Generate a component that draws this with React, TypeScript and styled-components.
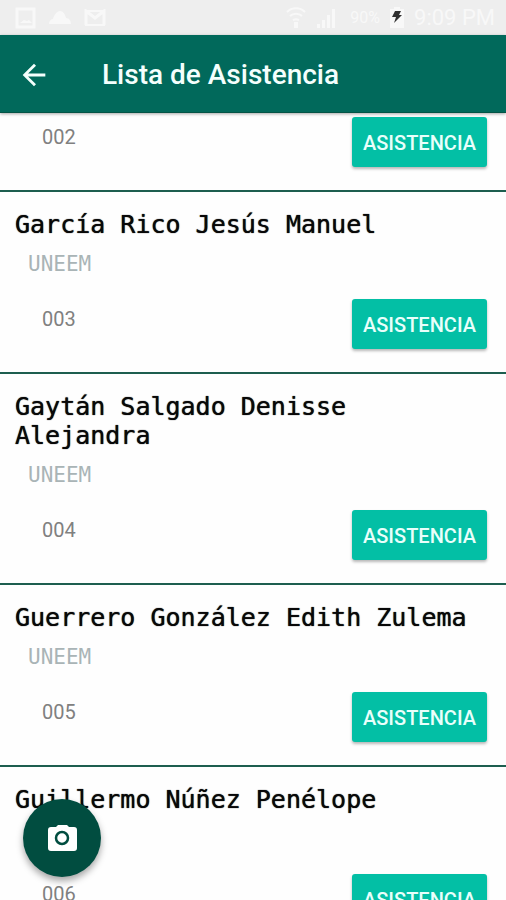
import React from "react";
import styled, { createGlobalStyle } from "styled-components";

const GlobalStyle = createGlobalStyle`
  *, *::before, *::after { box-sizing: border-box; }
  body { margin: 0; background: #fefefe; font-family: Roboto, sans-serif; }
  h1, h2, p, ul { margin: 0; padding: 0; }
`;

const Screen = styled.div`
  display: flex;
  flex-direction: column;
  height: 100vh;
  overflow: hidden;
`;

const StatusBar = styled.div`
  flex: none;
  display: flex;
  align-items: center;
  justify-content: space-between;
  height: 35px;
  padding: 0 11px 0 15px;
  background: #eeeeee;
  color: #f8f8f8;
`;

const StatusGroup = styled.div<{ $gap: number }>`
  display: flex;
  align-items: center;
  gap: ${(p) => p.$gap}px;
`;

const Percent = styled.span`
  margin-left: 4px;
  font-size: 16px;
  line-height: 20px;
`;

const Clock = styled.time`
  font-size: 22px;
  line-height: 24px;
`;

const AppBar = styled.header`
  flex: none;
  z-index: 1;
  display: flex;
  align-items: center;
  gap: 51px;
  height: 78px;
  padding: 2px 17px 0;
  background: #01695b;
  border-bottom: 1px solid #045446;
  box-shadow: 0 1px 3px rgba(0, 0, 0, 0.35);
  color: #f4fffd;
`;

const BackButton = styled.button`
  display: flex;
  padding: 0;
  border: 0;
  background: none;
  color: inherit;
  cursor: pointer;
`;

const Title = styled.h1`
  font-size: 28px;
  font-weight: 500;
  line-height: 32px;
`;

const List = styled.ul`
  flex: 1;
  min-height: 0;
  overflow: hidden;
  list-style: none;
`;

const Row = styled.li<{ $partial?: boolean }>`
  padding: ${(p) => (p.$partial ? 4 : 18)}px 19px 23px 15px;
  border-bottom: 2px solid #1d5e4f;
`;

const Name = styled.h2`
  color: #080808;
  font-family: "DejaVu Sans Mono", monospace;
  font-size: 25px;
  font-weight: 400;
  line-height: 29px;
  text-shadow: 0 0 1px #080808;
`;

const Group = styled.p`
  margin: 13px 0 23px 13px;
  color: #a9b4b6;
  font-family: "DejaVu Sans Mono", monospace;
  font-size: 21px;
  line-height: 24px;
`;

const RowFooter = styled.div`
  display: flex;
  align-items: flex-start;
  justify-content: space-between;
  padding-left: 27px;
`;

const Code = styled.span`
  padding-top: 8px;
  color: #808080;
  font-size: 20px;
  line-height: 24px;
`;

const AttendButton = styled.button`
  width: 135px;
  height: 50px;
  padding: 2px 0 0;
  border: 0;
  border-radius: 3px;
  background: #03bfa5;
  box-shadow: 0 2px 3px rgba(0, 0, 0, 0.28);
  color: #e9fffb;
  font-family: inherit;
  font-size: 20px;
  font-weight: 500;
  line-height: 24px;
  cursor: pointer;
`;

const CameraButton = styled.button`
  position: fixed;
  z-index: 2;
  left: 23px;
  bottom: 23px;
  display: flex;
  align-items: center;
  justify-content: center;
  width: 78px;
  height: 78px;
  padding: 0;
  border: 0;
  border-radius: 50%;
  background: #014d40;
  box-shadow: 0 4px 7px rgba(0, 0, 0, 0.35);
  color: #ffffff;
  cursor: pointer;
`;

interface Student {
  name?: string;
  group?: string;
  code: string;
}

const students: Student[] = [
  { code: "002" },
  { name: "García Rico Jesús Manuel", group: "UNEEM", code: "003" },
  { name: "Gaytán Salgado Denisse Alejandra", group: "UNEEM", code: "004" },
  { name: "Guerrero González Edith Zulema", group: "UNEEM", code: "005" },
  { name: "Guillermo Núñez Penélope", group: "\u00a0", code: "006" },
];

const PictureIcon = () => (
  <svg width="21" height="22" viewBox="0 0 21 22" fill="none" aria-hidden="true">
    <rect x="2" y="2" width="17" height="18" stroke="currentColor" strokeWidth="3" />
    <path d="M5 16l4-3 3 1 2-1 3 3z" fill="currentColor" />
  </svg>
);

const CloudIcon = () => (
  <svg width="24" height="22" viewBox="0 0 24 22" fill="currentColor" aria-hidden="true">
    <path d="M1 17c0-3 2-5 4-5 1-4 4-8 7-8s5 3 6 7c3 0 5 3 5 6z" />
  </svg>
);

const MailIcon = () => (
  <svg width="22" height="18" viewBox="0 0 22 18" fill="none" aria-hidden="true">
    <path d="M2 16V2l9 7 9-7v14" stroke="currentColor" strokeWidth="3" />
    <path d="M1 2h20M1 16h20" stroke="currentColor" strokeWidth="2" />
  </svg>
);

const WifiIcon = () => (
  <svg width="20" height="24" viewBox="0 0 20 24" fill="none" stroke="currentColor" strokeWidth="2" aria-hidden="true">
    <path d="M1 6c5-5 13-5 18 0M4 10c3-3 9-3 12 0M7 14c2-1 4-1 6 0" />
    <path d="M10 16v6" strokeWidth="4" />
  </svg>
);

const SignalIcon = () => (
  <svg width="20" height="22" viewBox="0 0 20 22" fill="currentColor" aria-hidden="true">
    <path d="M1 17h3v4H1zM6 13h3v8H6zM11 8h3v13h-3zM16 2h3v19h-3z" />
  </svg>
);

const BatteryIcon = () => (
  <svg width="14" height="21" viewBox="0 0 14 21" aria-hidden="true">
    <path d="M4 0h6v2h4v19H0V2h4z" fill="#f8f8f8" />
    <path d="M5 4h6l-2 4h3l-8 8 2-6H2z" fill="#303030" />
  </svg>
);

const BackIcon = () => (
  <svg width="34" height="34" viewBox="0 0 24 24" fill="currentColor" aria-hidden="true">
    <path d="M20 11H7.83l5.59-5.59L12 4l-8 8 8 8 1.41-1.41L7.83 13H20v-2z" />
  </svg>
);

const CameraIcon = () => (
  <svg width="36" height="36" viewBox="0 0 36 36" aria-hidden="true">
    <path
      d="M14 5h9l2 2h5a3 3 0 0 1 3 3v18a3 3 0 0 1-3 3H7a3 3 0 0 1-3-3v-18a3 3 0 0 1 3-3h5z"
      fill="currentColor"
    />
    <circle cx="18" cy="18" r="6" fill="none" stroke="#014d40" strokeWidth="2.5" />
  </svg>
);

export default function App() {
  return (
    <Screen>
      <GlobalStyle />
      <StatusBar>
        <StatusGroup $gap={12}>
          <PictureIcon />
          <CloudIcon />
          <MailIcon />
        </StatusGroup>
        <StatusGroup $gap={10}>
          <WifiIcon />
          <SignalIcon />
          <Percent>90%</Percent>
          <BatteryIcon />
          <Clock>9:09 PM</Clock>
        </StatusGroup>
      </StatusBar>
      <AppBar>
        <BackButton aria-label="Volver">
          <BackIcon />
        </BackButton>
        <Title>Lista de Asistencia</Title>
      </AppBar>
      <List>
        {students.map(({ name, group, code }) => (
          <Row key={code} $partial={!name}>
            {name && <Name>{name}</Name>}
            {group && <Group>{group}</Group>}
            <RowFooter>
              <Code>{code}</Code>
              <AttendButton>ASISTENCIA</AttendButton>
            </RowFooter>
          </Row>
        ))}
      </List>
      <CameraButton aria-label="Abrir cámara">
        <CameraIcon />
      </CameraButton>
    </Screen>
  );
}
